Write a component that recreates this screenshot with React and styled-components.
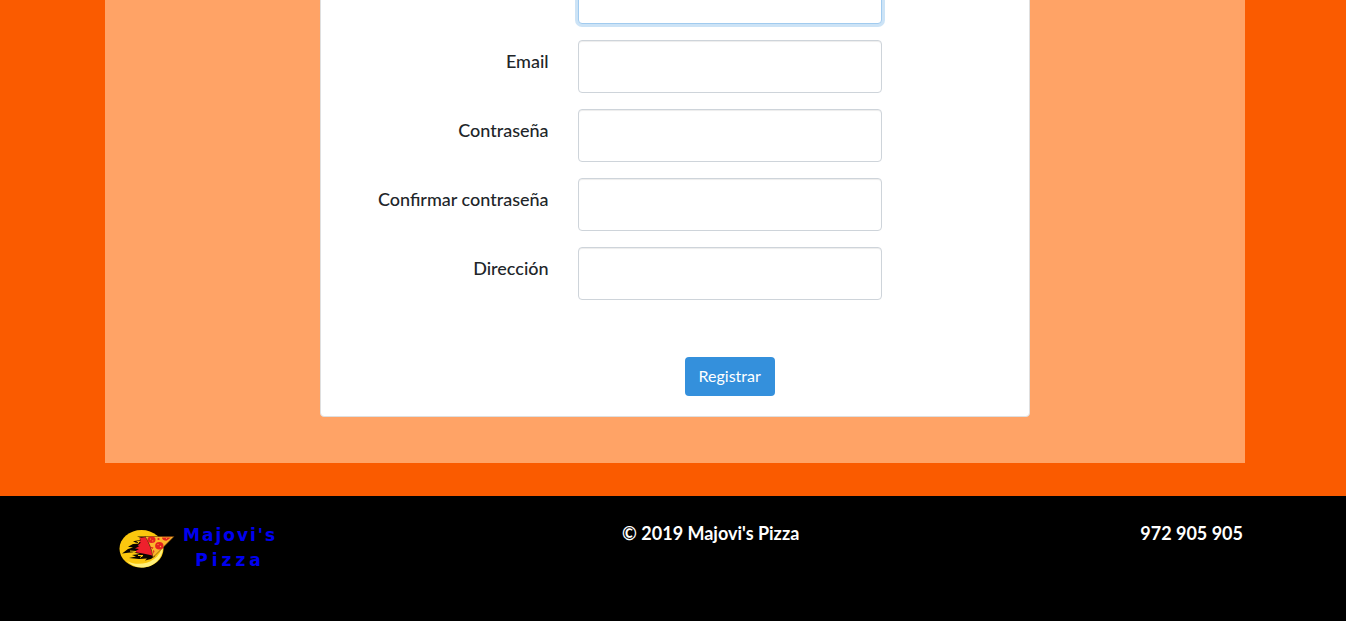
import React from 'react';
import styled, { createGlobalStyle } from 'styled-components';

const GlobalStyle = createGlobalStyle`
  *, *::before, *::after { box-sizing: border-box; }
  body {
    margin: 0;
    background: #fa5b00;
    color: #212529;
    font-family: Lato, 'Open Sans', sans-serif;
    font-size: 16px;
    line-height: 24px;
  }
`;

const Page = styled.div`
  display: flex;
  flex-direction: column;
  min-height: 100vh;
`;

const Main = styled.main`
  display: flex;
  padding: 0 101px 33px 105px;
`;

const Panel = styled.section`
  flex: 1;
  display: flex;
  justify-content: center;
  align-items: flex-start;
  padding: 0 15px 46px;
  background: #ffa366;
`;

const Card = styled.div`
  width: 64%;
  margin-top: -50px;
  padding: 20px;
  background: #fff;
  border: 1px solid #dfdfdf;
  border-radius: 4px;
`;

const Form = styled.form`
  display: flex;
  flex-direction: column;
  gap: 16px;
`;

const Row = styled.div`
  display: grid;
  grid-template-columns: 4fr 6fr 2fr;
`;

const Label = styled.label`
  grid-column: 1;
  padding: 7px 15px 0;
  text-align: right;
  font-size: 18px;
  font-weight: 500;
  line-height: 28px;
`;

const Field = styled.div`
  grid-column: 2;
  display: flex;
  padding: 0 16px 0 14px;
`;

const Input = styled.input`
  flex: 1;
  min-width: 0;
  height: 53px;
  padding: 6px 12px;
  font: inherit;
  color: #495057;
  background: #fff;
  border: 1px solid ${(p) => (p.$active ? '#a1cbef' : '#ced4da')};
  border-radius: 4px;
  outline: none;
  box-shadow: ${(p) =>
    p.$active
      ? '0 0 0 3px rgba(52, 144, 220, 0.25)'
      : 'inset 0 1px 1px rgba(0, 0, 0, 0.075)'};
`;

const Actions = styled(Row)`
  padding-top: 41px;
`;

const ButtonField = styled(Field)`
  justify-content: center;
`;

const Button = styled.button`
  height: 39px;
  padding: 0 14px 2px;
  font: inherit;
  color: #fff;
  background: #3490dc;
  border: 0;
  border-radius: 4px;
  cursor: pointer;
`;

const Footer = styled.footer`
  flex: 1;
  display: flex;
  justify-content: space-between;
  align-items: flex-start;
  min-height: 125px;
  padding: 23px 103px;
  background: #000;
  color: #fff;
`;

const FooterText = styled.p`
  margin: 0;
  font-size: 18px;
  font-weight: 700;
  line-height: 28px;
`;

const Brand = styled.a`
  display: flex;
  align-items: center;
  gap: 8px;
  padding: 4px 4px 0 15px;
  color: #0000f0;
  text-decoration: none;
`;

const BrandName = styled.span`
  display: flex;
  flex-direction: column;
  align-items: center;
  font: 700 17px/25px 'DejaVu Sans', sans-serif;
`;

const BrandWord = styled.span`
  letter-spacing: ${(p) => p.$tracking}px;
`;

const LogoMark = () => (
  <svg width="57" height="42" viewBox="0 0 57 42" aria-hidden="true">
    <ellipse cx="23.500" cy="21.800" rx="22" ry="18.800" fill="#fbc70e" />
    <path d="M9 34C22 41 42 35 44.500 18c2 12-8 22.500-21 22.500-6 0-11-3-14.500-6.500z" fill="#fff07a" />
    <path
      d="M19 9.500H28L37 29l-4 3-6 1.500 2-2-8 .5-10-1 7-1.500-4-1.500 8-1-7-1.800-5 .6-6 .8 6-4.600 5-1.500-5-.7 5-2.800 5-.3-5-2.500 6-1 3-2z"
      fill="#0a0500"
    />
    <path d="M21 11l7-1L36 29l-5-1.200-6-1.300-9-1.500 5-3-4-.5 4.500-2.500-2-.5 3.500-3-3-.5 3-2z" fill="#ee202c" />
    <path d="M18.500 15l3-1-2 3M12 24l6 .5-3 1.500M20 28.500l5 0-3 2" fill="none" stroke="#fbc70e" strokeWidth="1" />
    <path d="M27 9.500H56L35 30.500C34 23 31 15 27 9.500z" fill="#fbb62b" stroke="#5c2a06" strokeWidth="0.600" />
    <g fill="#e5231f">
      <ellipse cx="33.500" cy="12.800" rx="4" ry="3.300" />
      <path d="M44 10.500h9l-4.500 3.200c-3 0-4.500-1.500-4.500-3.200z" />
      <ellipse cx="41.300" cy="18.700" rx="4.200" ry="3.800" />
      <path d="M31.500 19.500l4 1-1 1.500zM35 23l1.500 1-1 3z" />
      <circle cx="40.500" cy="12" r="1.100" />
    </g>
    <g fill="#fbb62b">
      <circle cx="40" cy="17.500" r="0.600" />
      <circle cx="42.500" cy="19.500" r="0.700" />
      <circle cx="32.500" cy="12" r="0.600" />
      <circle cx="34.800" cy="13.800" r="0.600" />
      <circle cx="48.500" cy="11.500" r="0.500" />
    </g>
  </svg>
);

const fields = [
  { id: 'email', label: 'Email', type: 'email' },
  { id: 'password', label: 'Contraseña', type: 'password' },
  { id: 'password-confirm', label: 'Confirmar contraseña', type: 'password' },
  { id: 'direccion', label: 'Dirección', type: 'text' },
];

export default function App() {
  return (
    <Page>
      <GlobalStyle />
      <Main>
        <Panel>
          <Card>
            <Form onSubmit={(e) => e.preventDefault()}>
              <Row>
                <Field>
                  <Input $active type="text" name="name" aria-label="Nombre" />
                </Field>
              </Row>
              {fields.map((f) => (
                <Row key={f.id}>
                  <Label htmlFor={f.id}>{f.label}</Label>
                  <Field>
                    <Input id={f.id} name={f.id} type={f.type} />
                  </Field>
                </Row>
              ))}
              <Actions>
                <ButtonField>
                  <Button type="submit">Registrar</Button>
                </ButtonField>
              </Actions>
            </Form>
          </Card>
        </Panel>
      </Main>
      <Footer>
        <Brand href="#">
          <LogoMark />
          <BrandName>
            <BrandWord $tracking={2}>Majovi's</BrandWord>
            <BrandWord $tracking={4}>Pizza</BrandWord>
          </BrandName>
        </Brand>
        <FooterText>© 2019 Majovi's Pizza</FooterText>
        <FooterText>972 905 905</FooterText>
      </Footer>
    </Page>
  );
}
